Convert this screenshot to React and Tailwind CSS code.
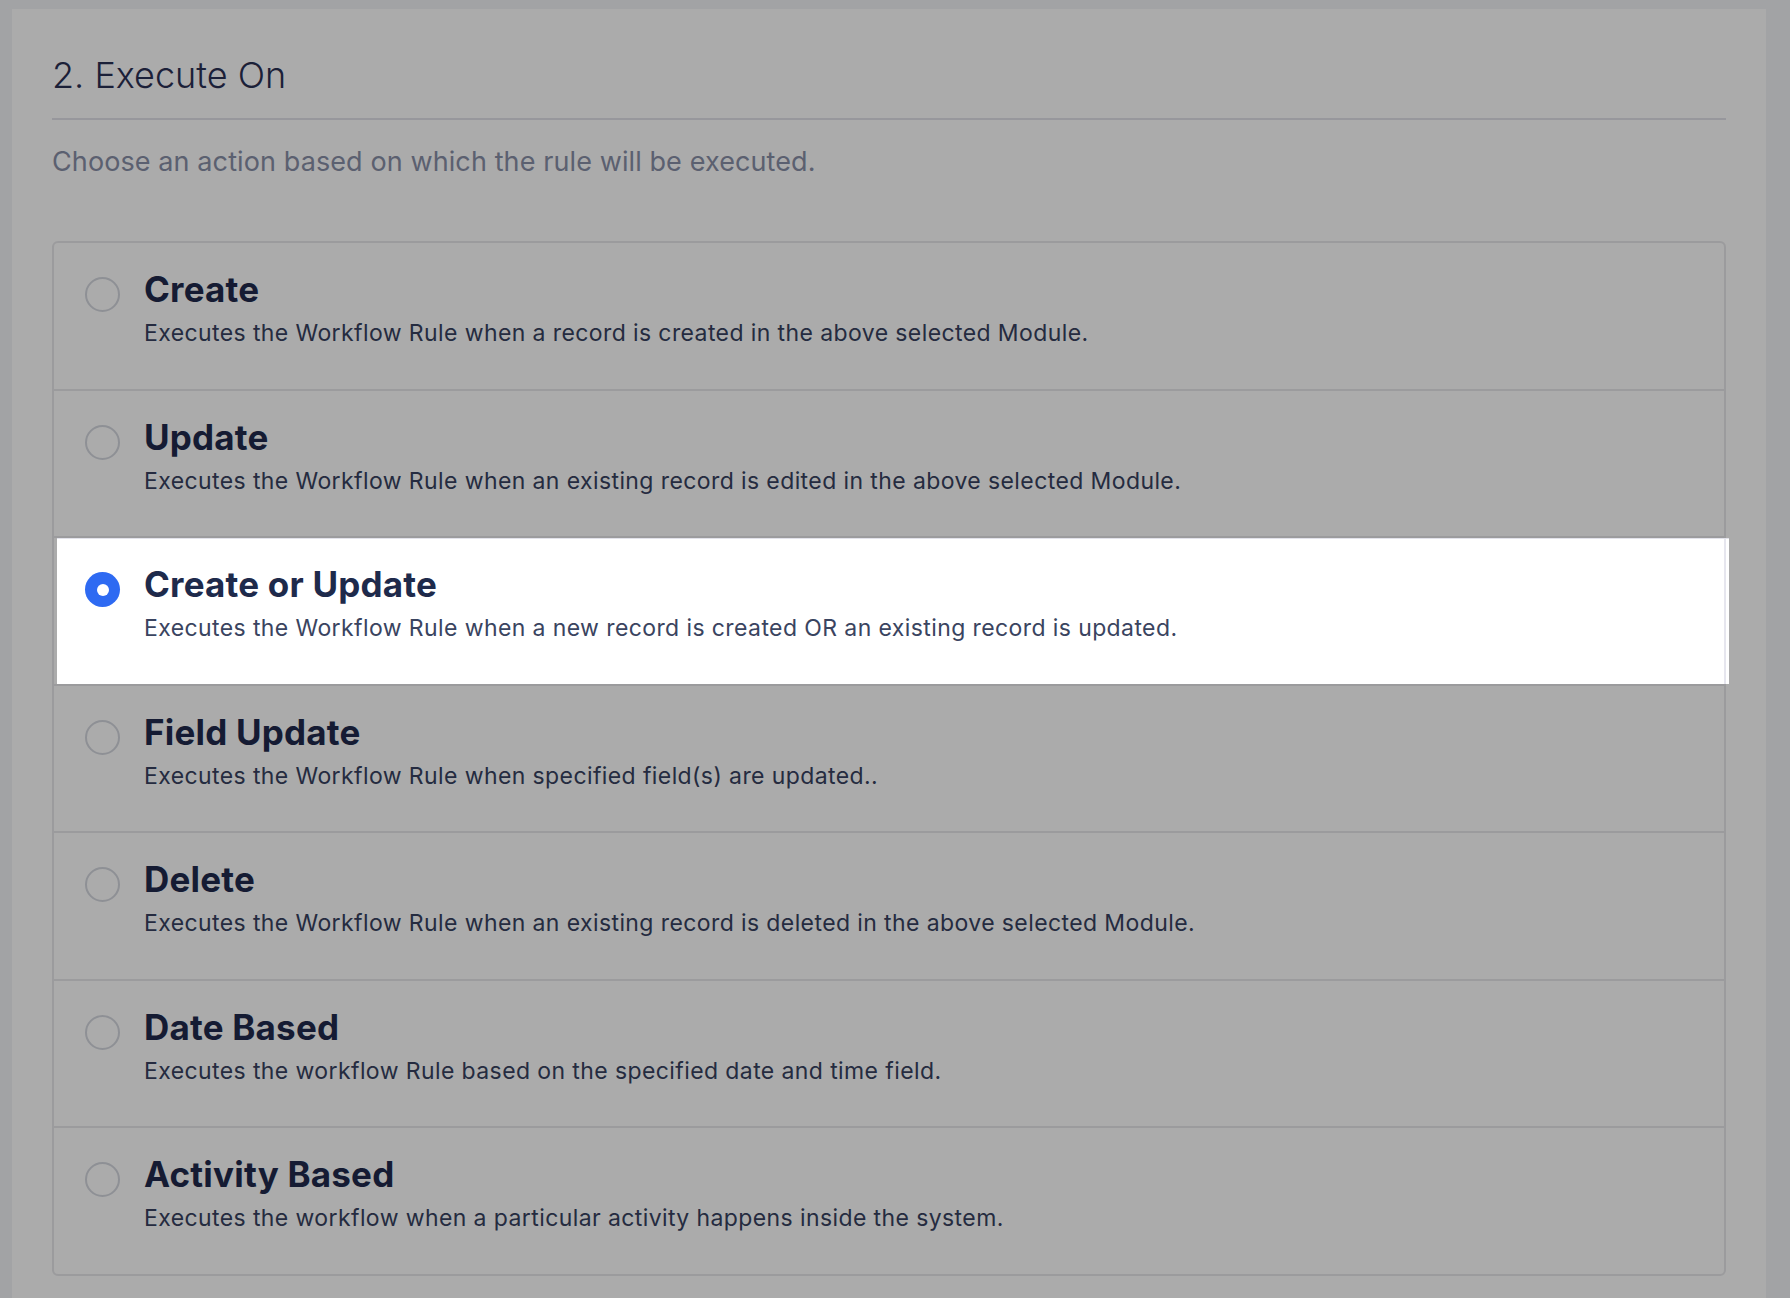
const options = [
  {
    title: "Create",
    text: "Executes the Workflow Rule when a record is created in the above selected Module.",
  },
  {
    title: "Update",
    text: "Executes the Workflow Rule when an existing record is edited in the above selected Module.",
  },
  {
    title: "Create or Update",
    text: "Executes the Workflow Rule when a new record is created OR an existing record is updated.",
    selected: true,
  },
  {
    title: "Field Update",
    text: "Executes the Workflow Rule when specified field(s) are updated..",
  },
  {
    title: "Delete",
    text: "Executes the Workflow Rule when an existing record is deleted in the above selected Module.",
  },
  {
    title: "Date Based",
    text: "Executes the workflow Rule based on the specified date and time field.",
  },
  {
    title: "Activity Based",
    text: "Executes the workflow when a particular activity happens inside the system.",
  },
];

function Radio({ checked }) {
  if (checked) {
    return (
      <span className="mt-2 flex h-[35px] w-[35px] shrink-0 items-center justify-center rounded-full bg-[#2e6af2]">
        <span className="h-3 w-3 rounded-full bg-white" />
      </span>
    );
  }
  return <span className="mt-2 h-[35px] w-[35px] shrink-0 rounded-full border-2 border-[#8e9095]" />;
}

function OptionRow({ title, text, selected }) {
  return (
    <div className="relative h-[147.5px] last:h-[145.5px]">
      {selected ? (
        <span className="absolute left-[3px] -right-[5px] top-0 h-[146px] border-t border-[#e2e2ea] bg-white">
          <span className="absolute inset-y-0 right-[3px] w-[2px] bg-[#e6e6ee]" />
        </span>
      ) : null}
      <label className="relative flex gap-6 pl-[31px] pt-[26px]">
        <Radio checked={selected} />
        <span className="flex flex-col gap-2">
          <span
            className={`text-[35px] font-bold leading-[40px] tracking-[0.2px] ${
              selected ? "text-[#1e2a4b]" : "text-[#151b33]"
            }`}
          >
            {title}
          </span>
          <span
            className={`text-[23px] leading-[32px] tracking-[0.4px] ${
              selected ? "text-[#3a4460]" : "text-[#252b40]"
            }`}
          >
            {text}
          </span>
        </span>
      </label>
    </div>
  );
}

export default function App() {
  return (
    <div className="min-h-screen bg-[#a2a3a5] pl-[12px] pr-[24px] pt-[9px] font-['Inter',sans-serif]">
      <section className="bg-[#ababab] px-10 pb-10 pt-[44px]">
        <h2 className="border-b-2 border-[#97979c] pb-[21px] text-[36px] font-light leading-[44px] text-[#1b2038]">
          2. Execute On
        </h2>
        <p className="mt-6 text-[27px] leading-[36px] tracking-[0.1px] text-[#5b6070]">
          Choose an action based on which the rule will be executed.
        </p>
        <div className="mt-[61px] divide-y-2 divide-[#9b9b9d] rounded-md border-2 border-[#9b9b9d]">
          {options.map((option) => (
            <OptionRow key={option.title} {...option} />
          ))}
        </div>
      </section>
    </div>
  );
}
